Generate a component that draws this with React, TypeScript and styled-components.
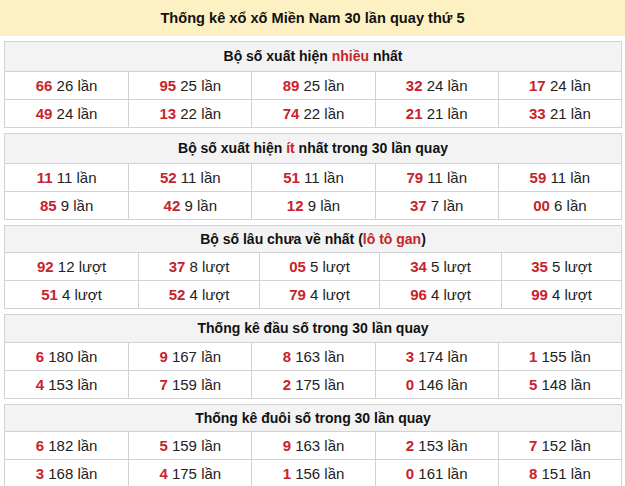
import React from 'react';
import styled, { createGlobalStyle } from 'styled-components';

const GlobalStyle = createGlobalStyle`
    body {
        margin: 0;
        background: #fff;
        font-family: 'Liberation Sans', Arial, sans-serif;
        color: #222;
    }
`

const Wrap = styled.div`
    width: 625px;
`
const Title = styled.div`
    height: 36px;
    line-height: 36px;
    background: #fdf1c4;
    text-align: center;
    font-size: 14.6px;
    font-weight: bold;
    color: #111;
`
const Tables = styled.div`
    display: flex;
    flex-direction: column;
    gap: 5px;
    padding: 5px 3px 0 4px;
`
const Table = styled.div`
    border: 1px solid #d2d2d2;
`
const Head = styled.div<{ $h: number }>`
    height: ${p => p.$h}px;
    line-height: ${p => p.$h}px;
    background: #f3f3f3;
    border-bottom: 1px solid #d2d2d2;
    text-align: center;
    font-size: 14px;
    font-weight: bold;
    color: #111;
    span {
        color: #c8232c;
    }
`
const Row = styled.div<{ $cols: string }>`
    display: grid;
    grid-template-columns: ${p => p.$cols};
    height: 27px;
    & + & {
        border-top: 1px solid #d2d2d2;
    }
`
const Cell = styled.div`
    line-height: 27px;
    text-align: center;
    font-size: 15px;
    white-space: nowrap;
    & + & {
        border-left: 1px solid #d2d2d2;
    }
    b {
        color: #c8232c;
    }
`

type Item = [string, string];

interface Block {
    title: React.ReactNode;
    head: number;
    cols?: string;
    rows: Item[][];
}

const blocks: Block[] = [
    {
        title: <>Bộ số xuất hiện <span>nhiều</span> nhất</>,
        head: 29,
        rows: [
            [['66', '26 lần'], ['95', '25 lần'], ['89', '25 lần'], ['32', '24 lần'], ['17', '24 lần']],
            [['49', '24 lần'], ['13', '22 lần'], ['74', '22 lần'], ['21', '21 lần'], ['33', '21 lần']],
        ],
    },
    {
        title: <>Bộ số xuất hiện <span>ít</span> nhất trong 30 lần quay</>,
        head: 29,
        rows: [
            [['11', '11 lần'], ['52', '11 lần'], ['51', '11 lần'], ['79', '11 lần'], ['59', '11 lần']],
            [['85', '9 lần'], ['42', '9 lần'], ['12', '9 lần'], ['37', '7 lần'], ['00', '6 lần']],
        ],
    },
    {
        title: <>Bộ số lâu chưa về nhất (<span>lô tô gan</span>)</>,
        head: 26,
        cols: '133px 121px 120px 122px 1fr',
        rows: [
            [['92', '12 lượt'], ['37', '8 lượt'], ['05', '5 lượt'], ['34', '5 lượt'], ['35', '5 lượt']],
            [['51', '4 lượt'], ['52', '4 lượt'], ['79', '4 lượt'], ['96', '4 lượt'], ['99', '4 lượt']],
        ],
    },
    {
        title: <>Thống kê đầu số trong 30 lần quay</>,
        head: 27,
        rows: [
            [['6', '180 lần'], ['9', '167 lần'], ['8', '163 lần'], ['3', '174 lần'], ['1', '155 lần']],
            [['4', '153 lần'], ['7', '159 lần'], ['2', '175 lần'], ['0', '146 lần'], ['5', '148 lần']],
        ],
    },
    {
        title: <>Thống kê đuôi số trong 30 lần quay</>,
        head: 26,
        rows: [
            [['6', '182 lần'], ['5', '159 lần'], ['9', '163 lần'], ['2', '153 lần'], ['7', '152 lần']],
            [['3', '168 lần'], ['4', '175 lần'], ['1', '156 lần'], ['0', '161 lần'], ['8', '151 lần']],
        ],
    },
]

const App = () => {
    return (
        <Wrap>
            <GlobalStyle />
            <Title>Thống kê xổ xố Miền Nam 30 lần quay thứ 5</Title>
            <Tables>
                {blocks.map((b, i) => (
                    <Table key={i}>
                        <Head $h={b.head}>{b.title}</Head>
                        {b.rows.map((r, j) => (
                            <Row key={j} $cols={b.cols || 'repeat(5, 1fr)'}>
                                {r.map(([n, t], k) => (
                                    <Cell key={k}><b>{n}</b> {t}</Cell>
                                ))}
                            </Row>
                        ))}
                    </Table>
                ))}
            </Tables>
        </Wrap>
    )
}

export default App;
